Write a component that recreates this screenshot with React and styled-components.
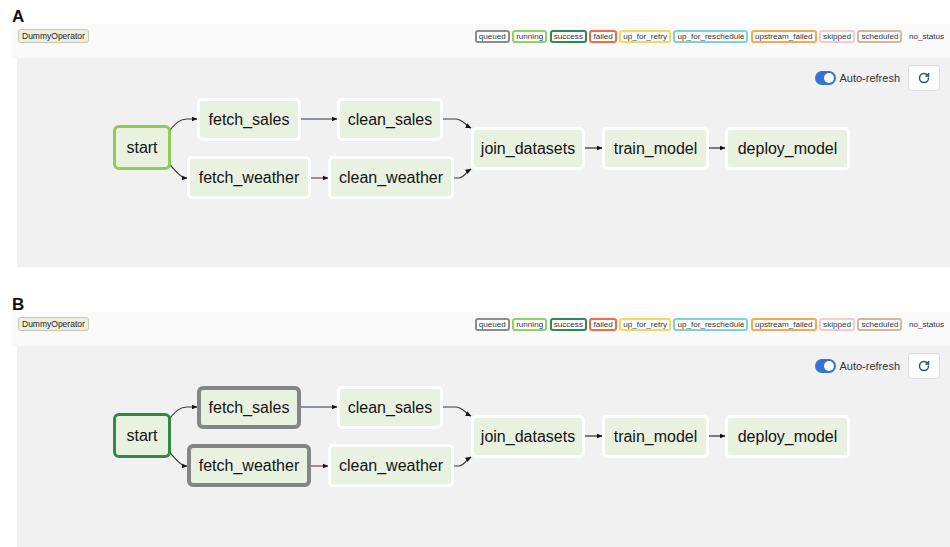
import React from "react";
import styled, { createGlobalStyle } from "styled-components";
import { RotateCw } from "lucide-react";

const Global = createGlobalStyle`
  html, body { margin: 0; padding: 0; background: #ffffff; }
  body { font-family: "Liberation Sans", Arial, Helvetica, sans-serif; color: #222; overflow: hidden; }
`;

const Figure = styled.div`
  width: 950px;
  display: flex;
  flex-direction: column;
`;

const Panel = styled.section`
  display: flex;
  flex-direction: column;
  padding-bottom: ${(p) => p.$gap}px;
`;

const PanelLabel = styled.div`
  height: 15px;
  padding: 9px 0 0 12px;
  font-size: 17px;
  line-height: 16px;
  font-weight: 700;
  color: #111;
`;

const Header = styled.div`
  margin-left: 12px;
  height: 34px;
  box-sizing: border-box;
  padding: 5px 2px 0 6px;
  background: #fafafa;
  display: flex;
  justify-content: space-between;
  align-items: flex-start;
`;

const OperatorBadge = styled.span`
  display: inline-flex;
  align-items: center;
  height: 14px;
  box-sizing: border-box;
  padding: 0 3px;
  background: #eeeedc;
  border: 1px solid #c8c8b6;
  border-radius: 3px;
  font-size: 8.5px;
  color: #222;
`;

const Legend = styled.div`
  display: flex;
  gap: 2.5px;
  margin-top: 1px;
`;

const StateChip = styled.span`
  display: inline-flex;
  align-items: center;
  height: 13px;
  box-sizing: border-box;
  padding: 0 2px;
  border: 2px solid ${(p) => p.$color || "transparent"};
  border-radius: 3px;
  font-size: 8.1px;
  color: #333;
  background: ${(p) => (p.$color ? "#fff" : "transparent")};
`;

const Canvas = styled.div`
  position: relative;
  margin-left: 17px;
  height: ${(p) => p.$h}px;
  background: #f0f1f0;
  overflow: hidden;
`;

const Toolbar = styled.div`
  position: absolute;
  top: 7px;
  right: 10px;
  display: flex;
  align-items: center;
`;

const Toggle = styled.span`
  position: relative;
  width: 21px;
  height: 14px;
  border-radius: 7px;
  background: #3274d6;
  &::after {
    content: "";
    position: absolute;
    top: 2px;
    right: 2px;
    width: 10px;
    height: 10px;
    border-radius: 50%;
    background: #fff;
  }
`;

const ToggleText = styled.span`
  margin-left: 3px;
  font-size: 11px;
  color: #333;
`;

const RefreshButton = styled.button`
  margin-left: 8px;
  width: 32px;
  height: 26px;
  padding: 0;
  display: flex;
  align-items: center;
  justify-content: center;
  background: #fff;
  border: 1px solid #dcdcdc;
  border-radius: 3px;
  color: #3b4f6e;
`;

const Edges = styled.svg`
  position: absolute;
  left: 0;
  top: 0;
`;

const Node = styled.div`
  position: absolute;
  left: ${(p) => p.$x}px;
  top: ${(p) => p.$y}px;
  width: ${(p) => p.$w}px;
  height: ${(p) => p.$h}px;
  box-sizing: border-box;
  display: flex;
  align-items: center;
  justify-content: center;
  background: #e9f1e1;
  border: ${(p) => p.$bw}px solid ${(p) => p.$bc};
  border-radius: ${(p) => p.$r}px;
  font-size: 16px;
  color: #141414;
  white-space: nowrap;
`;

const STATES = [
  ["queued", "#8c8c8c"],
  ["running", "#8fd26c"],
  ["success", "#2f8a4c"],
  ["failed", "#f0694a"],
  ["up_for_retry", "#f7d661"],
  ["up_for_reschedule", "#80d4cf"],
  ["upstream_failed", "#f6aa4d"],
  ["skipped", "#f7c9d0"],
  ["scheduled", "#cfbb9c"],
  ["no_status", null],
];

const NODES = [
  { id: "start", x: 96, y: 67, w: 58, h: 45 },
  { id: "fetch_sales", x: 180, y: 40, w: 104, h: 43 },
  { id: "clean_sales", x: 320, y: 40, w: 106, h: 43 },
  { id: "fetch_weather", x: 170, y: 98, w: 124, h: 43 },
  { id: "clean_weather", x: 311, y: 98, w: 126, h: 43 },
  { id: "join_datasets", x: 454, y: 69, w: 114, h: 43 },
  { id: "train_model", x: 585, y: 69, w: 107, h: 43 },
  { id: "deploy_model", x: 708, y: 69, w: 125, h: 43 },
];

const EDGES = [
  { d: "M153,72 C159,65 163,61 170,61 L180,61", c: "#4a3a36" },
  { d: "M153,107 C160,114 163,119 168,120 L170,120", c: "#3a3a3a" },
  { d: "M284,61 L320,61", c: "#2f3a48" },
  { d: "M294,120 L311,120", c: "#7a4a40" },
  { d: "M426,61 L438,61 C446,61 448,67 454,70", c: "#3a3a3a" },
  { d: "M437,120 L442,120 C448,119 449,114 454,111", c: "#3a3a3a" },
  { d: "M568,90 L585,90", c: "#2a2a2a" },
  { d: "M692,90 L708,90", c: "#2a2a2a" },
];

const STYLES = {
  A: {
    start: { bw: 3, bc: "#8fcb55", r: 6 },
  },
  B: {
    start: { bw: 3, bc: "#2f8a44", r: 6 },
    fetch_sales: { bw: 4, bc: "#858585", r: 6 },
    fetch_weather: { bw: 4, bc: "#858585", r: 6 },
  },
};

function Graph({ panel, height }) {
  const custom = STYLES[panel];
  return (
    <Canvas $h={height}>
      <Edges width="933" height="209">
        <defs>
          <marker
            id={`arr-${panel}`}
            markerWidth="6"
            markerHeight="6"
            refX="5.5"
            refY="3"
            orient="auto"
            markerUnits="userSpaceOnUse"
          >
            <path d="M0,0.5 L6,3 L0,5.5 z" fill="#111" />
          </marker>
        </defs>
        {EDGES.map((e, i) => (
          <path
            key={i}
            d={e.d}
            fill="none"
            stroke={e.c}
            strokeWidth="1.2"
            markerEnd={`url(#arr-${panel})`}
          />
        ))}
      </Edges>
      {NODES.map((n) => {
        const s = custom[n.id] || { bw: 3, bc: "#ffffff", r: 5 };
        return (
          <Node key={n.id} $x={n.x} $y={n.y} $w={n.w} $h={n.h} $bw={s.bw} $bc={s.bc} $r={s.r}>
            {n.id}
          </Node>
        );
      })}
      <Toolbar>
        <Toggle />
        <ToggleText>Auto-refresh</ToggleText>
        <RefreshButton aria-label="refresh">
          <RotateCw size={12} strokeWidth={3} />
        </RefreshButton>
      </Toolbar>
    </Canvas>
  );
}

function DagPanel({ label, height, gap }) {
  return (
    <Panel $gap={gap}>
      <PanelLabel>{label}</PanelLabel>
      <Header>
        <OperatorBadge>DummyOperator</OperatorBadge>
        <Legend>
          {STATES.map(([name, color]) => (
            <StateChip key={name} $color={color}>
              {name}
            </StateChip>
          ))}
        </Legend>
      </Header>
      <Graph panel={label} height={height} />
    </Panel>
  );
}

export default function App() {
  return (
    <>
      <Global />
      <Figure>
        <DagPanel label="A" height={209} gap={21} />
        <DagPanel label="B" height={201} gap={0} />
      </Figure>
    </>
  );
}
